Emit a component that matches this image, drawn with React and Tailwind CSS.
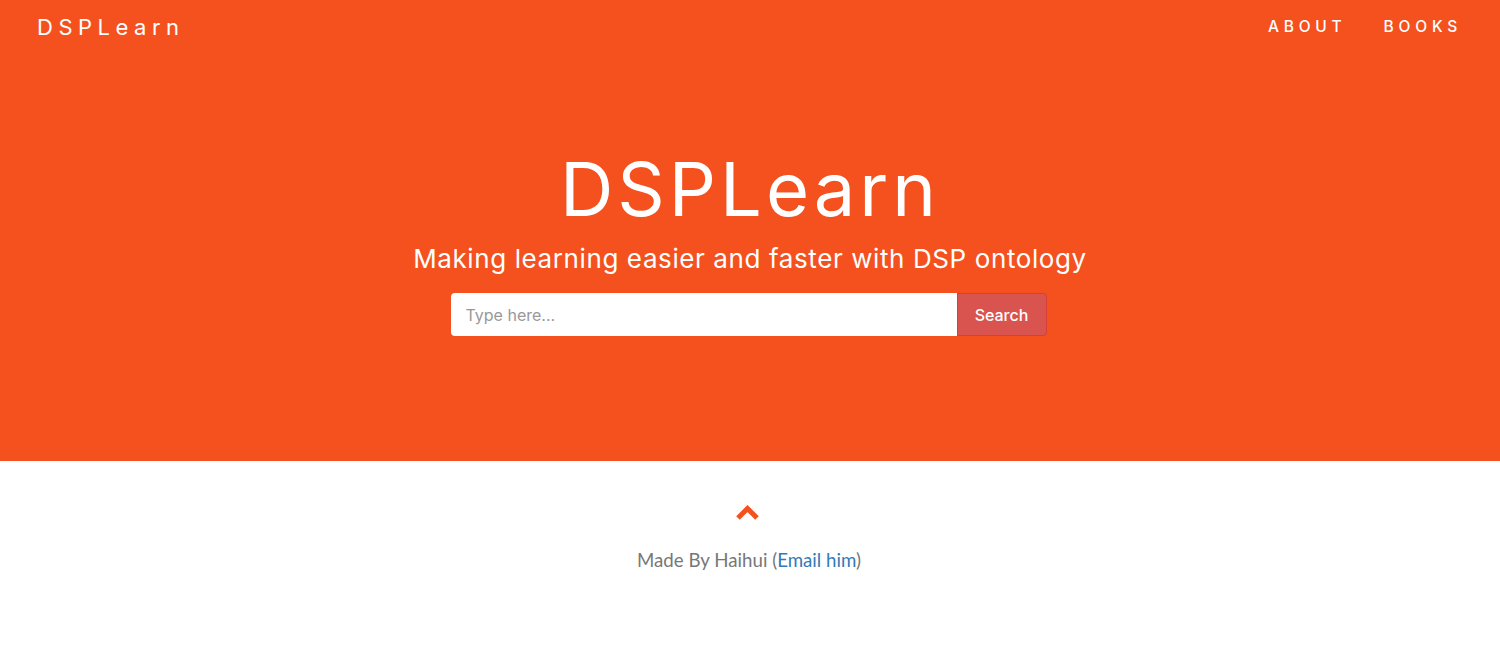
import React from "react";

export default function App() {
  return (
    <div className="w-[1500px] min-h-[667px] bg-white">
      <div className="bg-[#f4511e] h-[461px] flex flex-col font-['Inter',sans-serif] text-white">
        <nav className="h-[53px] flex items-center justify-between pl-[37px] pr-[38px]">
          <span className="text-[22px] tracking-[5.5px] leading-none">DSPLearn</span>
          <div className="flex items-center gap-[37px] text-[15.5px] tracking-[4.8px] font-medium">
            <span>ABOUT</span>
            <span>BOOKS</span>
          </div>
        </nav>
        <div className="flex flex-col items-center pt-[99px]">
          <h1 className="text-[74px] leading-none tracking-[4px]">DSPLearn</h1>
          <p className="text-[26px] leading-none mt-[20px] tracking-[0.6px]">Making learning easier and faster with DSP ontology</p>
          <div className="flex mt-[21px] h-[43px] -ml-[3px]">
            <input
              type="text"
              placeholder="Type here..."
              className="w-[506px] h-[43px] bg-white rounded-l-[4px] pl-[15px] text-[16px] text-gray-700 placeholder:text-[#999] outline-none font-['Inter',sans-serif]"
            />
            <button className="w-[90px] h-[43px] bg-[#d9534f] border border-[#d43f3a] rounded-r-[4px] text-white text-[16px] font-medium">
              Search
            </button>
          </div>
        </div>
      </div>
      <footer className="flex flex-col items-center pt-[44px] font-['Lato',sans-serif]">
        <svg width="23" height="16" viewBox="0 0 23 16" className="-ml-[6px]">
          <path d="M2 13 L11.5 3.5 L21 13" fill="none" stroke="#f4511e" strokeWidth="5" />
        </svg>
        <p className="mt-[25px] text-[18.7px] text-[#777] -ml-[2px]">
          Made By Haihui (<span className="text-[#337ab7]">Email him</span>)
        </p>
      </footer>
    </div>
  );
}
